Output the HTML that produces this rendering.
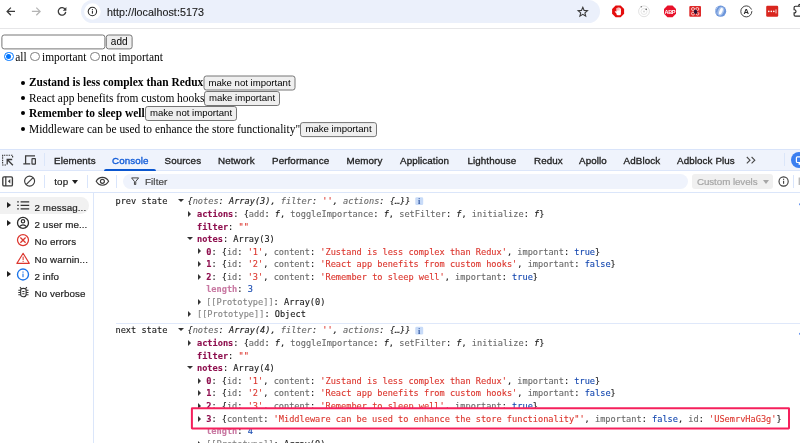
<!DOCTYPE html>
<html>
<head>
<meta charset="utf-8">
<title>localhost:5173</title>
<style>
html,body{margin:0;padding:0;background:#fff;}
body{width:800px;height:443px;overflow:hidden;position:relative;font-family:"Liberation Sans",sans-serif;}
#root{position:absolute;left:0;top:0;width:800px;height:443px;overflow:hidden;will-change:transform;}
.abs{position:absolute;white-space:nowrap;}
svg{position:absolute;overflow:visible;}
#tb{left:0;top:0;width:800px;height:28.5px;background:#fff;border-bottom:1px solid #e6e6e8;box-sizing:border-box;}
#url{left:81px;top:-0.5px;width:518.7px;height:23.5px;border-radius:11.75px;background:#ebf0fb;}
#urltxt{left:107px;top:5.7px;font-size:10.7px;letter-spacing:0.06px;line-height:12px;color:#1f1f1f;-webkit-text-stroke:0.15px #1f1f1f;}
.pg{font-family:"Liberation Serif",serif;font-size:11.43px;line-height:13px;color:#000;}
.btn{box-sizing:border-box;height:15px;border:1px solid #8a8a8a;border-radius:2.5px;background:#efefef;font-family:"Liberation Sans",sans-serif;font-size:9.6px;line-height:13px;text-align:center;color:#000;}
.btnt{font-family:"Liberation Sans",sans-serif;text-align:center;color:#000;}
.radio{box-sizing:border-box;width:9.8px;height:9.8px;border:1px solid #7d7d7d;border-radius:50%;background:#fff;}
.dot{width:4px;height:4px;border-radius:50%;background:#000;}
#dt{left:0;top:149px;width:800px;height:295px;background:#fff;}
#tabbar{left:0;top:149px;width:800px;height:22px;background:#eff3fc;border-top:1px solid #d9e4fa;border-bottom:1px solid #dce6fa;box-sizing:border-box;}
.tab{font-size:9.8px;letter-spacing:0.1px;line-height:12px;color:#1f1f1f;top:154.6px;-webkit-text-stroke:0.32px currentColor;}
#bar2{left:0;top:171px;width:800px;height:21.5px;background:#fff;border-bottom:1px solid #dbe6fa;box-sizing:border-box;}
.ui{font-size:9.8px;letter-spacing:0.1px;line-height:12px;color:#1f1f1f;-webkit-text-stroke:0.2px currentColor;}
.sep{width:1px;background:#d9e5fb;}
#side{left:0;top:192.5px;width:93px;height:251px;border-right:1px solid #dbe6fa;background:#fff;}
.mono{font-family:"DejaVu Sans Mono","Liberation Mono",monospace;font-size:8.62px;line-height:12px;color:#1a1a1a;-webkit-text-stroke:0.12px currentColor;}
.k{color:#8e0f4e;font-weight:bold;}
.kl{color:#c878a2;font-weight:bold;}
.p{color:#858585;}
.s{color:#dc362e;}
.n{color:#1548b0;}
.g{color:#6a6a6a;}
.it{font-style:italic;}
</style>
</head>
<body>
<div id="root">
<div id="tb" class="abs"></div>
<div id="url" class="abs"></div>
<div id="urltxt" class="abs">http://localhost:5173</div>
<svg style="left:0;top:0" width="800" height="28" viewBox="0 0 800 28">
<!-- back -->
<path d="M15 11.4H7.4M10.9 7.6L7.1 11.4L10.9 15.2" fill="none" stroke="#3a3a3a" stroke-width="1.25" stroke-linejoin="miter"/>
<!-- forward -->
<path d="M31.9 11.4H39.8M36.3 7.6L40.1 11.4L36.3 15.2" fill="none" stroke="#b4b4b4" stroke-width="1.25"/>
<!-- reload -->
<path d="M65.3 9.6A3.75 3.75 0 1 0 65.75 11.9" fill="none" stroke="#3a3a3a" stroke-width="1.3"/>
<path d="M66.4 7.1V10.7H62.8Z" fill="#3a3a3a"/>
<!-- site info -->
<circle cx="92.4" cy="11.5" r="8.3" fill="#fff"/>
<circle cx="92.4" cy="11.5" r="4.2" fill="none" stroke="#2a2a2a" stroke-width="1.05"/>
<rect x="91.9" y="10.9" width="1.05" height="2.8" fill="#2a2a2a"/>
<rect x="91.9" y="9.1" width="1.05" height="1.1" fill="#2a2a2a"/>
<!-- star -->
<path transform="translate(582.8 11.7) scale(0.88) translate(-582.8 -11.2)" d="M582.8 6.2L584.3 9.7L588.1 10L585.2 12.5L586.1 16.2L582.8 14.2L579.5 16.2L580.4 12.5L577.5 10L581.3 9.7Z" fill="none" stroke="#3a3a3a" stroke-width="1.25" stroke-linejoin="miter"/>
<!-- adblock (red octagon with hand) -->
<path d="M615.6 5.5H620.6L624.1 9V13.8L620.6 17.3H615.6L612.1 13.8V9Z" fill="#e40d0d"/>
<g fill="#fff"><rect x="616.5" y="10.4" width="4.4" height="4.9" rx="1.3"/><rect x="616.5" y="8.1" width="1" height="4" rx="0.5"/><rect x="617.65" y="7.2" width="1" height="5" rx="0.5"/><rect x="618.8" y="7.4" width="1" height="5" rx="0.5"/><rect x="619.9" y="8.3" width="1" height="4" rx="0.5"/><path d="M616.9 13.8L614.9 11.9Q614.6 11.4 615.1 11.2T616.2 11.6L617.2 12.4Z"/></g>
<!-- react devtools (disabled gray) -->
<circle cx="644" cy="11.3" r="5.4" fill="#fff" stroke="#d4d4d4" stroke-width="0.7"/>
<circle cx="644" cy="11.5" r="3" fill="none" stroke="#dedede" stroke-width="0.7"/>
<circle cx="644" cy="11.5" r="0.9" fill="#d4d4d4"/>
<circle cx="646.2" cy="9.3" r="0.8" fill="#555"/>
<circle cx="641.3" cy="6.8" r="0.7" fill="#777"/>
<!-- ABP -->
<path d="M667.5 5.5H672.5L676 9V13.8L672.5 17.3H667.5L664 13.8V9Z" fill="#e8112a"/>
<text x="669.8" y="13.5" font-family="Liberation Sans, sans-serif" font-weight="bold" font-size="5.6" text-anchor="middle" fill="#fff" letter-spacing="-0.45">ABP</text>
<!-- red square ext -->
<rect x="689.3" y="6" width="11.7" height="10.8" rx="1" fill="#de2a2a"/>
<circle cx="693" cy="9" r="1.5" fill="none" stroke="#fff" stroke-width="0.7"/>
<circle cx="697.3" cy="9" r="1.5" fill="none" stroke="#fff" stroke-width="0.7"/>
<circle cx="693" cy="13.6" r="1.5" fill="none" stroke="#fff" stroke-width="0.7"/>
<circle cx="697.6" cy="13.8" r="1.3" fill="none" stroke="#fff" stroke-width="0.7"/>
<ellipse cx="695.6" cy="11.8" rx="1.7" ry="2.2" fill="#2a1030" transform="rotate(-20 695.6 11.8)"/>
<!-- blue swirl -->
<circle cx="720.6" cy="11.2" r="5.6" fill="#6c95da"/>
<ellipse cx="720.8" cy="11.2" rx="3.1" ry="4.6" fill="#a9c3ec" transform="rotate(22 720.8 11.2)"/>
<ellipse cx="720.9" cy="11.2" rx="1.5" ry="3.5" fill="#fff" transform="rotate(22 720.9 11.2)"/>
<path d="M716.2 13.6A5.1 5.1 0 0 1 718.2 6.7" fill="none" stroke="#b9cdee" stroke-width="0.9"/>
<!-- circled A -->
<circle cx="746.3" cy="11.4" r="5.5" fill="#fff" stroke="#2b2b2b" stroke-width="0.9"/>
<text x="746.3" y="14.2" font-family="Liberation Sans, sans-serif" font-weight="bold" font-size="7.6" text-anchor="middle" fill="#2b2b2b">A</text>
<rect x="751" y="9.6" width="1.6" height="1.4" fill="#fff"/>
<!-- lastpass -->
<rect x="766.2" y="5.8" width="12" height="11" rx="1.2" fill="#d9261f"/>
<circle cx="768.8" cy="11.4" r="0.8" fill="#fff"/><circle cx="771.3" cy="11.4" r="0.8" fill="#fff"/><circle cx="773.8" cy="11.4" r="0.8" fill="#fff"/>
<rect x="775.6" y="9.4" width="0.8" height="4" fill="#fff"/>
<!-- extensions puzzle (clipped) -->
<path d="M800 6.2H798.6Q798.6 4.4 800 4.4M798.6 6.2H795.4Q794.1 6.2 794.1 7.5V9.7Q796 9.7 796 11.3T794.1 12.9V14.9Q794.1 16.1 795.4 16.1H800" fill="none" stroke="#2b2b2b" stroke-width="1.15"/>
</svg>

<svg style="left:0;top:0" width="800" height="443"><rect x="1.90" y="35.00" width="103.00" height="13.90" rx="2.3" fill="#fff" stroke="#767676" stroke-width="1"/></svg>
<svg style="left:0;top:0" width="800" height="443"><rect x="106.30" y="35.00" width="25.80" height="13.90" rx="2.3" fill="#efefef" stroke="#767676" stroke-width="1"/></svg>
<div class="abs btnt" style="left:105.8px;top:34.5px;width:26.8px;height:14.9px;line-height:13.30px;font-size:10px;">add</div>
<div class="abs radio" style="left:3.9px;top:51.6px;border-color:#0075ff;"></div>
<div class="abs" style="left:6.2px;top:53.9px;width:5.2px;height:5.2px;border-radius:50%;background:#0075ff;"></div>
<div class="abs pg" style="left:15.3px;top:51.4px;">all</div>
<div class="abs radio" style="left:30.4px;top:51.6px;"></div>
<div class="abs pg" style="left:42px;top:51.4px;">important</div>
<div class="abs radio" style="left:89.8px;top:51.6px;"></div>
<div class="abs pg" style="left:101px;top:51.4px;">not important</div>
<div class="abs dot" style="left:20.8px;top:80.8px;"></div>
<div class="abs pg" style="left:29px;top:76px;font-weight:bold;">Zustand is less complex than Redux</div>
<svg style="left:0;top:0" width="800" height="443"><rect x="204.00" y="76.00" width="91.00" height="14.00" rx="2.3" fill="#efefef" stroke="#767676" stroke-width="1"/></svg>
<div class="abs btnt" style="left:203.5px;top:75.5px;width:92px;height:15px;line-height:13.40px;font-size:9.6px;">make not important</div>
<div class="abs dot" style="left:20.8px;top:96.3px;"></div>
<div class="abs pg" style="left:29px;top:91.5px;">React app benefits from custom hooks</div>
<svg style="left:0;top:0" width="800" height="443"><rect x="204.50" y="91.50" width="75.00" height="14.00" rx="2.3" fill="#efefef" stroke="#767676" stroke-width="1"/></svg>
<div class="abs btnt" style="left:204px;top:91.0px;width:76px;height:15px;line-height:13.40px;font-size:9.6px;">make important</div>
<div class="abs dot" style="left:20.8px;top:111.3px;"></div>
<div class="abs pg" style="left:29px;top:106.5px;font-weight:bold;">Remember to sleep well</div>
<svg style="left:0;top:0" width="800" height="443"><rect x="145.50" y="106.50" width="91.00" height="14.00" rx="2.3" fill="#efefef" stroke="#767676" stroke-width="1"/></svg>
<div class="abs btnt" style="left:145px;top:106.0px;width:92px;height:15px;line-height:13.40px;font-size:9.6px;">make not important</div>
<div class="abs dot" style="left:20.8px;top:127.39999999999999px;"></div>
<div class="abs pg" style="left:29px;top:122.6px;">Middleware can be used to enhance the store functionality"</div>
<svg style="left:0;top:0" width="800" height="443"><rect x="300.50" y="122.60" width="76.00" height="14.00" rx="2.3" fill="#efefef" stroke="#767676" stroke-width="1"/></svg>
<div class="abs btnt" style="left:300px;top:122.1px;width:77px;height:15px;line-height:13.40px;font-size:9.6px;">make important</div>
<div id="dt" class="abs"></div><div id="tabbar" class="abs"></div><div id="bar2" class="abs"></div><div id="side" class="abs"></div>
<div class="abs tab" style="left:54px;">Elements</div>
<div class="abs tab" style="left:112px;color:#0f5ad8;">Console</div>
<div class="abs tab" style="left:164.5px;">Sources</div>
<div class="abs tab" style="left:218px;">Network</div>
<div class="abs tab" style="left:272px;">Performance</div>
<div class="abs tab" style="left:346.5px;">Memory</div>
<div class="abs tab" style="left:400px;">Application</div>
<div class="abs tab" style="left:467.4px;">Lighthouse</div>
<div class="abs tab" style="left:534px;">Redux</div>
<div class="abs tab" style="left:579px;">Apollo</div>
<div class="abs tab" style="left:623.6px;">AdBlock</div>
<div class="abs tab" style="left:677px;">Adblock Plus</div>
<div class="abs" style="left:103.8px;top:168.6px;width:52.4px;height:2.2px;background:#0b57d0;border-radius:2px 2px 0 0;"></div>
<div class="abs sep" style="left:44px;top:153px;height:13px;background:#dbe6f9;"></div>
<div class="abs sep" style="left:784px;top:153px;height:13px;background:#dbe6f9;"></div>
<div class="abs sep" style="left:44px;top:175px;height:13px;"></div>
<div class="abs ui" style="left:54.3px;top:175.5px;">top</div>
<div class="abs" style="left:72.4px;top:179.6px;width:0;height:0;border-left:3.1px solid transparent;border-right:3.1px solid transparent;border-top:4.3px solid #1f1f1f;"></div>
<div class="abs sep" style="left:87px;top:175px;height:13px;"></div>
<div class="abs sep" style="left:116px;top:175px;height:13px;"></div>
<div class="abs" style="left:122.6px;top:173.6px;width:565.3px;height:15.4px;border-radius:7.7px;background:#eff3fc;"></div>
<div class="abs ui" style="left:145px;top:175.5px;color:#474747;">Filter</div>
<div class="abs" style="left:692.2px;top:173.5px;width:80.5px;height:15.4px;border-radius:3px;background:#f0f0f0;"></div>
<div class="abs ui" style="left:696.9px;top:175.5px;color:#a6a6a6;letter-spacing:-0.07px;">Custom levels</div>
<div class="abs" style="left:762.8px;top:179.6px;width:0;height:0;border-left:3.1px solid transparent;border-right:3.1px solid transparent;border-top:4.3px solid #a6a6a6;"></div>
<div class="abs sep" style="left:793px;top:175px;height:13px;"></div>
<svg style="left:0;top:0" width="800" height="443" viewBox="0 0 800 443">
<!-- inspect element -->
<path d="M6 165H2.6V155.2H12.6V158.6" fill="none" stroke="#3c3c3c" stroke-width="1.15" stroke-dasharray="1.5 0.9"/>
<path d="M12.2 159.5H7.2V164.5M7.2 159.5L12.9 165.2" fill="none" stroke="#3c3c3c" stroke-width="1.3"/>
<!-- device toolbar -->
<path d="M35 155.8H25.6V163.2M23.3 163.9H30.2" fill="none" stroke="#3c3c3c" stroke-width="1.25"/>
<rect x="32" y="158.6" width="3.4" height="5.6" rx="0.5" fill="none" stroke="#3c3c3c" stroke-width="1.2"/>
<!-- more tabs chevrons -->
<path d="M746.8 157L750 160.2L746.8 163.4M751.6 157L754.8 160.2L751.6 163.4" fill="none" stroke="#474747" stroke-width="1.1"/>
<!-- blue circle button (clipped) -->
<circle cx="799" cy="160" r="8" fill="#3b7ff0"/>
<rect x="796.4" y="156.9" width="7" height="5.6" rx="0.9" fill="none" stroke="#fff" stroke-width="1.2"/><rect x="798.6" y="163" width="1.4" height="1.8" fill="#fff"/>
<!-- sidebar toggle -->
<rect x="2.8" y="176.8" width="9.6" height="9.1" rx="1.2" fill="none" stroke="#3c3c3c" stroke-width="1.35"/>
<path d="M5.8 176.7V186" stroke="#3c3c3c" stroke-width="1.25"/>
<path d="M10.3 179.1V183.5L7.9 181.3Z" fill="#3c3c3c"/>
<!-- clear console -->
<circle cx="29.6" cy="181.1" r="5" fill="none" stroke="#3c3c3c" stroke-width="1.15"/>
<path d="M26.1 184.6L33.1 177.6" stroke="#3c3c3c" stroke-width="1.15"/>
<!-- eye -->
<path d="M96.2 181.3C97.6 178.7 99.8 177.4 102.4 177.4S107.2 178.7 108.6 181.3C107.2 183.9 105 185.2 102.4 185.2S97.6 183.9 96.2 181.3Z" fill="none" stroke="#3c3c3c" stroke-width="1.15"/>
<circle cx="102.4" cy="181.3" r="2" fill="none" stroke="#3c3c3c" stroke-width="1.15"/>
<!-- funnel -->
<path d="M131.6 177.9H138.6L135.75 181.5V184.5H134.45V181.5Z" fill="none" stroke="#3c3c3c" stroke-width="0.95" stroke-linejoin="round"/>
<!-- info/issues icon right -->
<circle cx="783.6" cy="181.5" r="4.6" fill="none" stroke="#3c3c3c" stroke-width="1.1"/>
<rect x="783.05" y="180.8" width="1.1" height="3" fill="#3c3c3c"/>
<rect x="783.05" y="178.7" width="1.1" height="1.2" fill="#3c3c3c"/>
<!-- gear edge -->
<rect x="798.6" y="177.5" width="1.4" height="7.5" fill="#b9b9b9"/>
<rect x="799.1" y="203.4" width="0.9" height="1.8" fill="#5b8def"/>
<rect x="799.1" y="332.9" width="0.9" height="1.8" fill="#5b8def"/>
</svg>

<div class="abs" style="left:-10px;top:197.4px;width:99.4px;height:16.3px;border-radius:8.2px;background:#f1f1f1;"></div>
<div class="abs" style="left:6.6px;top:202.20px;width:0;height:0;border-top:3.3px solid transparent;border-bottom:3.3px solid transparent;border-left:4px solid #1f1f1f;"></div>
<div class="abs ui" style="left:34.5px;top:201.75px;letter-spacing:0.1px;">2 messag...</div>
<div class="abs" style="left:6.6px;top:219.60px;width:0;height:0;border-top:3.3px solid transparent;border-bottom:3.3px solid transparent;border-left:4px solid #1f1f1f;"></div>
<div class="abs ui" style="left:34.5px;top:219.45px;letter-spacing:0.1px;">2 user me...</div>
<div class="abs ui" style="left:34.5px;top:236.05px;letter-spacing:0.1px;">No errors</div>
<div class="abs ui" style="left:34.5px;top:253.65px;letter-spacing:0.1px;">No warnin...</div>
<div class="abs" style="left:6.6px;top:271.30px;width:0;height:0;border-top:3.3px solid transparent;border-bottom:3.3px solid transparent;border-left:4px solid #1f1f1f;"></div>
<div class="abs ui" style="left:34.5px;top:270.95px;letter-spacing:0.1px;">2 info</div>
<div class="abs ui" style="left:34.5px;top:287.95px;letter-spacing:0.1px;">No verbose</div>
<svg style="left:0;top:0" width="100" height="443" viewBox="0 0 100 443">
<!-- list icon -->
<g stroke="#333" stroke-width="1.35" fill="none">
<path d="M20.6 201.9H29.2M20.6 205.4H29.2M20.6 208.9H29.2"/>
<path d="M17.2 201.9H18.8M17.2 205.4H18.8M17.2 208.9H18.8"/>
</g>
<!-- user icon -->
<circle cx="23" cy="222.9" r="5.5" fill="none" stroke="#2c2c2c" stroke-width="1.3"/>
<circle cx="23" cy="221.3" r="1.7" fill="none" stroke="#2c2c2c" stroke-width="1.2"/>
<path d="M19.4 226.6Q23 223.2 26.6 226.6" fill="none" stroke="#2c2c2c" stroke-width="1.2"/>
<!-- error icon -->
<circle cx="23" cy="240.1" r="5.5" fill="none" stroke="#dc362e" stroke-width="1.25"/>
<path d="M20.4 237.5L25.6 242.7M25.6 237.5L20.4 242.7" stroke="#dc362e" stroke-width="1.25"/>
<!-- warning -->
<path d="M23.1 253.3L29.3 263.4H16.9Z" fill="none" stroke="#dc362e" stroke-width="1.1" stroke-linejoin="round"/>
<rect x="22.6" y="256.6" width="1.05" height="3.4" fill="#dc362e"/>
<rect x="22.6" y="260.8" width="1.05" height="1.1" fill="#dc362e"/>
<!-- info -->
<circle cx="23" cy="274.5" r="5.5" fill="none" stroke="#1a73e8" stroke-width="1.35"/>
<rect x="22.45" y="273.6" width="1.1" height="3.6" fill="#1a73e8"/>
<rect x="22.45" y="271.5" width="1.1" height="1.2" fill="#1a73e8"/>
<!-- bug -->
<g stroke="#333" stroke-width="1.1" fill="none">
<path d="M20.7 290Q20.7 288.4 23.4 288.4T26.1 290V294.4Q26.1 296.7 23.4 296.7T20.7 294.4Z"/>
<path d="M21.3 288.6L19.9 287.2M25.5 288.6L26.9 287.2"/>
<path d="M18.3 290.2H20.7M18.3 292.5H20.7M18.3 294.8H20.7M26.1 290.2H28.5M26.1 292.5H28.5M26.1 294.8H28.5"/>
<path d="M22.3 291.5H24.5M22.3 293.7H24.5"/>
</g>
</svg>

<div class="abs mono" style="left:115.5px;top:195.40px;">prev state</div>
<div class="abs" style="left:177.70000000000002px;top:199.40px;width:0;height:0;border-left:3px solid transparent;border-right:3px solid transparent;border-top:3.5px solid #333;"></div>
<div class="abs mono" style="left:187.5px;top:195.40px;"><span class="it">{<span class="g">notes</span>: Array(3), <span class="g">filter</span>: <span class="s">''</span>, <span class="g">actions</span>: {…}}</span></div>
<svg style="left:0;top:0" width="800" height="443"><rect x="415.30" y="197.20" width="7.90" height="7.90" rx="1.3" fill="#c8dbf8" stroke="none" stroke-width="0"/></svg>
<div class="abs" style="left:415.3px;top:198.20px;width:7.9px;text-align:center;font:bold 8.4px/8.4px 'Liberation Serif',serif;color:#3f62a8;">i</div>
<div class="abs" style="left:188.29999999999998px;top:210.75px;width:0;height:0;border-top:3.1px solid transparent;border-bottom:3.1px solid transparent;border-left:3.7px solid #333;"></div>
<div class="abs mono" style="left:197px;top:207.95px;"><span class="k">actions</span>: {<span class="g">add</span>: <span class="it">f</span>, <span class="g">toggleImportance</span>: <span class="it">f</span>, <span class="g">setFilter</span>: <span class="it">f</span>, <span class="g">initialize</span>: <span class="it">f</span>}</div>
<div class="abs mono" style="left:197px;top:220.50px;"><span class="k">filter</span>: <span class="s">""</span></div>
<div class="abs" style="left:187.4px;top:237.05px;width:0;height:0;border-left:3px solid transparent;border-right:3px solid transparent;border-top:3.5px solid #333;"></div>
<div class="abs mono" style="left:197px;top:233.05px;"><span class="k">notes</span>: Array(3)</div>
<div class="abs" style="left:198.29999999999998px;top:248.40px;width:0;height:0;border-top:3.1px solid transparent;border-bottom:3.1px solid transparent;border-left:3.7px solid #333;"></div>
<div class="abs mono" style="left:206.2px;top:245.60px;"><span class="k">0</span>: {<span class="g">id</span>: <span class="s">'1'</span>, <span class="g">content</span>: <span class="s">'Zustand is less complex than Redux'</span>, <span class="g">important</span>: <span class="n">true</span>}</div>
<div class="abs" style="left:198.29999999999998px;top:260.95px;width:0;height:0;border-top:3.1px solid transparent;border-bottom:3.1px solid transparent;border-left:3.7px solid #333;"></div>
<div class="abs mono" style="left:206.2px;top:258.15px;"><span class="k">1</span>: {<span class="g">id</span>: <span class="s">'2'</span>, <span class="g">content</span>: <span class="s">'React app benefits from custom hooks'</span>, <span class="g">important</span>: <span class="n">false</span>}</div>
<div class="abs" style="left:198.29999999999998px;top:273.50px;width:0;height:0;border-top:3.1px solid transparent;border-bottom:3.1px solid transparent;border-left:3.7px solid #333;"></div>
<div class="abs mono" style="left:206.2px;top:270.70px;"><span class="k">2</span>: {<span class="g">id</span>: <span class="s">'3'</span>, <span class="g">content</span>: <span class="s">'Remember to sleep well'</span>, <span class="g">important</span>: <span class="n">true</span>}</div>
<div class="abs mono" style="left:206.2px;top:283.25px;"><span class="kl">length</span>: <span class="n">3</span></div>
<div class="abs" style="left:198.29999999999998px;top:298.60px;width:0;height:0;border-top:3.1px solid transparent;border-bottom:3.1px solid transparent;border-left:3.7px solid #333;"></div>
<div class="abs mono" style="left:206.2px;top:295.80px;"><span class="p">[[Prototype]]</span>: Array(0)</div>
<div class="abs" style="left:188.29999999999998px;top:311.15px;width:0;height:0;border-top:3.1px solid transparent;border-bottom:3.1px solid transparent;border-left:3.7px solid #333;"></div>
<div class="abs mono" style="left:197px;top:308.35px;"><span class="p">[[Prototype]]</span>: Object</div>
<div class="abs" style="left:116px;top:323px;width:684px;height:1px;background:#dfe8fa;"></div>
<div class="abs mono" style="left:115.5px;top:324.40px;">next state</div>
<div class="abs" style="left:177.70000000000002px;top:328.40px;width:0;height:0;border-left:3px solid transparent;border-right:3px solid transparent;border-top:3.5px solid #333;"></div>
<div class="abs mono" style="left:187.5px;top:324.40px;"><span class="it">{<span class="g">notes</span>: Array(4), <span class="g">filter</span>: <span class="s">''</span>, <span class="g">actions</span>: {…}}</span></div>
<svg style="left:0;top:0" width="800" height="443"><rect x="415.30" y="326.70" width="7.90" height="7.90" rx="1.3" fill="#c8dbf8" stroke="none" stroke-width="0"/></svg>
<div class="abs" style="left:415.3px;top:327.70px;width:7.9px;text-align:center;font:bold 8.4px/8.4px 'Liberation Serif',serif;color:#3f62a8;">i</div>
<div class="abs" style="left:188.29999999999998px;top:340.25px;width:0;height:0;border-top:3.1px solid transparent;border-bottom:3.1px solid transparent;border-left:3.7px solid #333;"></div>
<div class="abs mono" style="left:197px;top:337.45px;"><span class="k">actions</span>: {<span class="g">add</span>: <span class="it">f</span>, <span class="g">toggleImportance</span>: <span class="it">f</span>, <span class="g">setFilter</span>: <span class="it">f</span>, <span class="g">initialize</span>: <span class="it">f</span>}</div>
<div class="abs mono" style="left:197px;top:349.90px;"><span class="k">filter</span>: <span class="s">""</span></div>
<div class="abs" style="left:187.4px;top:366.35px;width:0;height:0;border-left:3px solid transparent;border-right:3px solid transparent;border-top:3.5px solid #333;"></div>
<div class="abs mono" style="left:197px;top:362.35px;"><span class="k">notes</span>: Array(4)</div>
<div class="abs" style="left:198.29999999999998px;top:377.70px;width:0;height:0;border-top:3.1px solid transparent;border-bottom:3.1px solid transparent;border-left:3.7px solid #333;"></div>
<div class="abs mono" style="left:206.2px;top:374.90px;"><span class="k">0</span>: {<span class="g">id</span>: <span class="s">'1'</span>, <span class="g">content</span>: <span class="s">'Zustand is less complex than Redux'</span>, <span class="g">important</span>: <span class="n">true</span>}</div>
<div class="abs" style="left:198.29999999999998px;top:390.20px;width:0;height:0;border-top:3.1px solid transparent;border-bottom:3.1px solid transparent;border-left:3.7px solid #333;"></div>
<div class="abs mono" style="left:206.2px;top:387.40px;"><span class="k">1</span>: {<span class="g">id</span>: <span class="s">'2'</span>, <span class="g">content</span>: <span class="s">'React app benefits from custom hooks'</span>, <span class="g">important</span>: <span class="n">false</span>}</div>
<div class="abs" style="left:198.29999999999998px;top:403.10px;width:0;height:0;border-top:3.1px solid transparent;border-bottom:3.1px solid transparent;border-left:3.7px solid #333;"></div>
<div class="abs mono" style="left:206.2px;top:400.30px;"><span class="k">2</span>: {<span class="g">id</span>: <span class="s">'3'</span>, <span class="g">content</span>: <span class="s">'Remember to sleep well'</span>, <span class="g">important</span>: <span class="n">true</span>}</div>
<div class="abs mono" style="left:206.2px;top:425.30px;"><span class="kl">length</span>: <span class="n">4</span></div>
<div class="abs" style="left:198.29999999999998px;top:440.80px;width:0;height:0;border-top:3.1px solid transparent;border-bottom:3.1px solid transparent;border-left:3.7px solid #333;"></div>
<div class="abs mono" style="left:206.2px;top:438.00px;"><span class="p">[[Prototype]]</span>: Array(0)</div>
<svg style="left:0;top:0" width="800" height="443"><rect x="191.90" y="408.20" width="597.10" height="20.20" rx="0.3" fill="#fff" stroke="#f5205c" stroke-width="2"/></svg>
<div class="abs" style="left:198.29999999999998px;top:416.00px;width:0;height:0;border-top:3.1px solid transparent;border-bottom:3.1px solid transparent;border-left:3.7px solid #333;"></div>
<div class="abs mono" style="left:206.2px;top:413.20px;"><span class="k">3</span>: {<span class="g">content</span>: <span class="s">'Middleware can be used to enhance the store functionality"'</span>, <span class="g">important</span>: <span class="n">false</span>, <span class="g">id</span>: <span class="s">'USemrvHaG3g'</span>}</div>
</div>
</body>
</html>
